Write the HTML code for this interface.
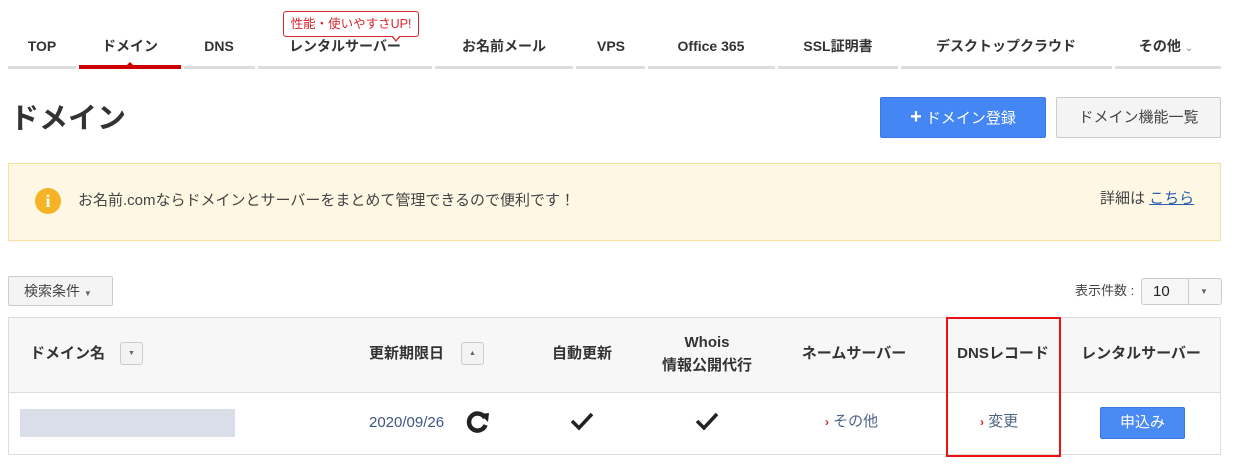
<!DOCTYPE html>
<html><head><meta charset="utf-8"><style>
*{margin:0;padding:0;box-sizing:border-box}
body{width:1241px;height:465px;background:#fff;font-family:"Liberation Sans","Noto Sans CJK JP",sans-serif;color:#333;position:relative;overflow:hidden;line-height:20px}
.a{position:absolute}
.nav{font-size:14px;font-weight:bold;color:#333;top:36px;line-height:20px;white-space:nowrap;transform:translateX(-50%)}
.seg{position:absolute;top:66px;height:3px;background:#ddd}
.th{position:absolute;font-size:15px;font-weight:bold;color:#333;text-align:center;transform:translateX(-50%);line-height:22px;white-space:nowrap}
.sb{position:absolute;width:23px;height:23px;border:1px solid #ccc;border-radius:3px;background:#f3f3f3;font-size:7px;color:#666;text-align:center;line-height:21px}
</style></head><body>
<div class="nav a" style="left:42px">TOP</div>
<div class="nav a" style="left:130px">ドメイン</div>
<div class="nav a" style="left:219px">DNS</div>
<div class="nav a" style="left:345px">レンタルサーバー</div>
<div class="nav a" style="left:504px">お名前メール</div>
<div class="nav a" style="left:611px">VPS</div>
<div class="nav a" style="left:711px">Office 365</div>
<div class="nav a" style="left:838px">SSL証明書</div>
<div class="nav a" style="left:1006px">デスクトップクラウド</div>
<div class="nav a" style="left:1166px">その他 <span style="font-weight:normal;font-size:10px;color:#888">&#8964;</span></div>
<div class="a" style="left:283px;top:11px;width:136px;height:26px;border:1px solid #d9262e;border-radius:3px;color:#d9262e;font-size:12.5px;line-height:24px;text-align:center;background:#fff">性能・使いやすさUP!</div>
<div class="a" style="left:391px;top:36px;width:0;height:0;border-left:5px solid transparent;border-right:5px solid transparent;border-top:6px solid #d9262e"></div>
<div class="a" style="left:392px;top:35px;width:0;height:0;border-left:4px solid transparent;border-right:4px solid transparent;border-top:5px solid #fff"></div>
<div class="seg" style="left:8px;width:68px"></div>
<div class="seg" style="left:79px;width:102px;top:65px;height:4px;background:#cc0000"></div>
<div class="a" style="left:127px;top:62px;border-left:3px solid transparent;border-right:3px solid transparent;border-bottom:3px solid #cc0000"></div>
<div class="seg" style="left:184px;width:71px"></div>
<div class="seg" style="left:258px;width:174px"></div>
<div class="seg" style="left:435px;width:138px"></div>
<div class="seg" style="left:576px;width:69px"></div>
<div class="seg" style="left:648px;width:127px"></div>
<div class="seg" style="left:778px;width:120px"></div>
<div class="seg" style="left:901px;width:211px"></div>
<div class="seg" style="left:1115px;width:106px"></div>

<div class="a" style="left:10px;top:101px;font-size:29px;line-height:36px;font-weight:bold;color:#333">ドメイン</div>
<div class="a" style="left:880px;top:97px;width:166px;height:41px;background:#4486f4;border:1px solid #3b78e0;border-radius:2px;color:#fff;font-size:15px;line-height:39px;text-align:center"><b style="font-size:20px">+</b> ドメイン登録</div>
<div class="a" style="left:1056px;top:97px;width:165px;height:41px;background:#f4f4f4;border:1px solid #ccc;border-radius:2px;color:#444;font-size:15px;line-height:39px;text-align:center">ドメイン機能一覧</div>

<div class="a" style="left:8px;top:163px;width:1213px;height:78px;background:#fdf7e4;border:1px solid #f5e29c"></div>
<div class="a" style="left:35px;top:188px;width:26px;height:26px;border-radius:50%;background:#f6b325;color:#fff;font-family:'Liberation Serif',serif;font-weight:bold;font-size:18px;text-align:center;line-height:26px">i</div>
<div class="a" style="left:78px;top:191px;font-size:15px;color:#444">お名前.comならドメインとサーバーをまとめて管理できるので便利です！</div>
<div class="a" style="left:1100px;top:189px;font-size:15px;color:#444">詳細は <span style="color:#2b5ea8;text-decoration:underline">こちら</span></div>

<div class="a" style="left:8px;top:276px;width:105px;height:30px;background:#f4f4f4;border:1px solid #ccc;border-radius:2px;font-size:14px;color:#444;line-height:28px;padding-left:15px">検索条件 <span style="font-size:8px;color:#666">▼</span></div>
<div class="a" style="left:1075px;top:281px;font-size:13px;color:#444">表示件数 :</div>
<div class="a" style="left:1141px;top:278px;width:81px;height:27px;background:#f6f6f6;border:1px solid #ccc;border-radius:3px;font-size:15px;color:#222;line-height:25px;padding-left:11px">10</div>
<div class="a" style="left:1188px;top:279px;width:1px;height:25px;background:#ccc"></div>
<div class="a" style="left:1200px;top:282px;font-size:8px;color:#666">▼</div>

<div class="a" style="left:8px;top:317px;width:1213px;height:138px;border:1px solid #ddd"></div>
<div class="a" style="left:9px;top:318px;width:1211px;height:75px;background:#f7f7f7;border-bottom:1px solid #ddd"></div>
<div class="th" style="left:30px;top:343px;transform:none">ドメイン名</div>
<div class="sb" style="left:120px;top:342px">▼</div>
<div class="th" style="left:369px;top:343px;transform:none">更新期限日</div>
<div class="sb" style="left:461px;top:342px">▲</div>
<div class="th" style="left:582px;top:343px">自動更新</div>
<div class="th" style="left:707px;top:331px;line-height:23px">Whois<br>情報公開代行</div>
<div class="th" style="left:854px;top:343px">ネームサーバー</div>
<div class="th" style="left:1003px;top:343px">DNSレコード</div>
<div class="th" style="left:1141px;top:343px">レンタルサーバー</div>

<div class="a" style="left:20px;top:409px;width:215px;height:28px;background:#d9dee8"></div>
<div class="a" style="left:369px;top:413px;font-size:15px;color:#3d5780">2020/09/26</div>
<svg class="a" style="left:466px;top:410px" width="24" height="24" viewBox="0 0 24 24"><path d="M19 8 A8.5 8.5 0 1 0 19.5 15" fill="none" stroke="#222" stroke-width="4.5"/><path d="M14 4 L23 3 L22 12 Z" fill="#222"/></svg>
<svg class="a" style="left:570px;top:411px" width="24" height="20" viewBox="0 0 24 20"><path d="M2 10 L9 17 L22 3" fill="none" stroke="#222" stroke-width="3.5"/></svg>
<svg class="a" style="left:695px;top:411px" width="24" height="20" viewBox="0 0 24 20"><path d="M2 10 L9 17 L22 3" fill="none" stroke="#222" stroke-width="3.5"/></svg>
<div class="a" style="left:825px;top:412px;font-size:15px;color:#4d6486"><span style="color:#d9262e;font-size:12px;font-weight:bold">›</span> その他</div>
<div class="a" style="left:980px;top:412px;font-size:15px;color:#4d6486"><span style="color:#d9262e;font-size:12px;font-weight:bold">›</span> 変更</div>
<div class="a" style="left:1100px;top:407px;width:85px;height:32px;background:#4a8af4;border:1px solid #3b78e0;border-radius:2px;color:#fff;font-size:15px;line-height:30px;text-align:center">申込み</div>
<div class="a" style="left:946px;top:317px;width:115px;height:140px;border:2px solid #ee1111"></div>
</body></html>
